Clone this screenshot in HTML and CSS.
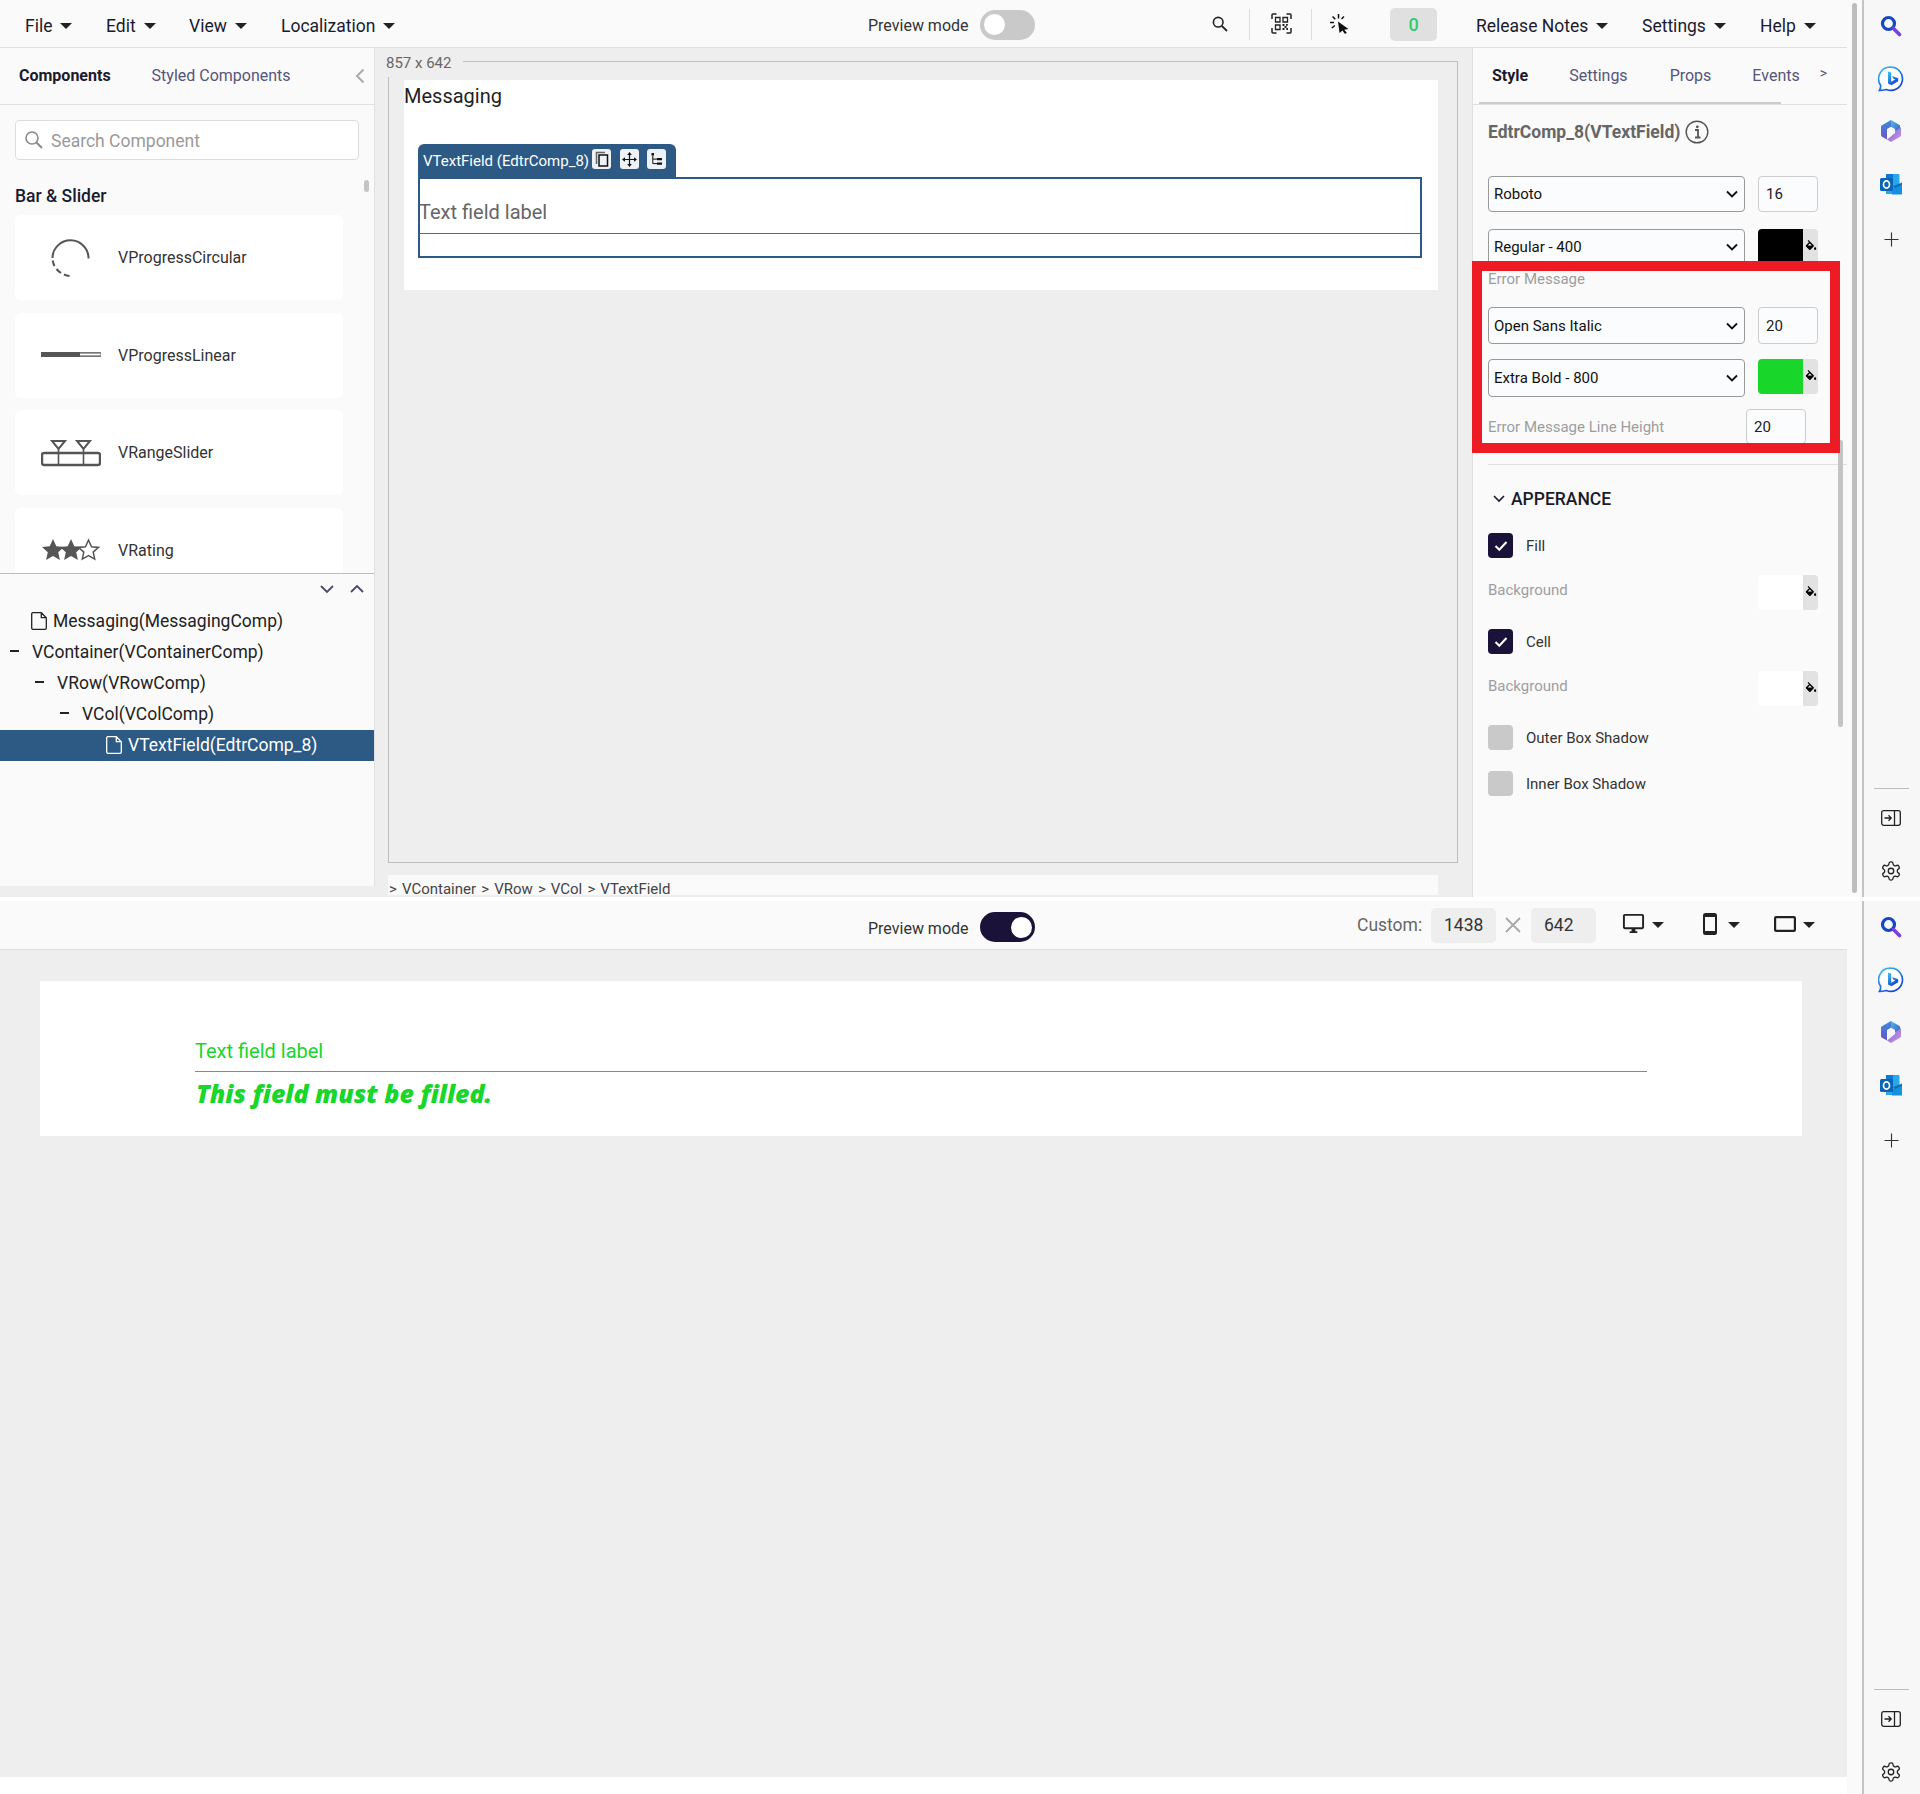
FILE: index.html
```html
<!DOCTYPE html>
<html lang="en">
<head>
<meta charset="utf-8">
<title>Messaging editor</title>
<link rel="stylesheet" href="styles.css">
</head>
<body>
<svg class="defs" width="0" height="0" aria-hidden="true">
  <defs>
    <linearGradient id="g-bing" x1="0" y1="0" x2="0.6" y2="1"><stop offset="0" stop-color="#3cc4f2"/><stop offset="1" stop-color="#1546d0"/></linearGradient>
    <linearGradient id="g-cop1" x1="0" y1="0" x2="0" y2="1"><stop offset="0" stop-color="#3a8bdc"/><stop offset="1" stop-color="#6a55c4"/></linearGradient>
    <linearGradient id="g-cop2" x1="0" y1="0" x2="1" y2="1"><stop offset="0" stop-color="#7f62d8"/><stop offset="1" stop-color="#c99ae6"/></linearGradient>
    <linearGradient id="g-cop3" x1="0" y1="0" x2="1" y2="1"><stop offset="0" stop-color="#56b8e6"/><stop offset="1" stop-color="#3a62c8"/></linearGradient>
    <symbol id="i-bucket" viewBox="0 0 24 24"><path d="M16.560 8.940L7.620 0 6.210 1.410l2.380 2.380-5.150 5.150c-.59.59-.59 1.540 0 2.120l5.500 5.500c.29.29.68.44 1.060.44s.77-.15 1.060-.44l5.500-5.500c.59-.58.59-1.530 0-2.120zM19 11.500s-2 2.170-2 3.500c0 1.100.9 2 2 2s2-.9 2-2c0-1.330-2-3.500-2-3.500z"/><path d="M5.500 10.500h9.500l-4.800 5z" fill="#fff" opacity="0"/><path d="M6.500 9.500 10 6l3.500 3.500z" fill="#fff"/></symbol>
    <symbol id="i-file" viewBox="0 0 16 18"><path d="M2 .7h8.300L15.300 5.700V16a1.300 1.300 0 0 1-1.300 1.300H2A1.300 1.300 0 0 1 .7 16V2A1.300 1.300 0 0 1 2 .7zM10.300.7v5h5" fill="none" stroke="currentColor" stroke-width="1.300"/></symbol>
    <symbol id="i-rsearch" viewBox="0 0 22 22"><circle cx="8.500" cy="8.500" r="6" fill="none" stroke="#1646c0" stroke-width="3.200"/><path d="M13.500 13.500 19.500 19.500" stroke="#7a3fe0" stroke-width="3.600" stroke-linecap="round"/></symbol>
    <symbol id="i-bing" viewBox="0 0 26 26"><path d="M13 1.200a11.600 11.600 0 1 1-4.600 22.300c-2.400.5-5 .9-7 .9.900-1.300 1.300-3 1.300-5A11.600 11.600 0 0 1 13 1.200z" fill="#fff" stroke="url(#g-bing)" stroke-width="1.700"/><path d="M10 5.500l3.200 1.100v9.200l4-2.300-2-1-1-2.400 6 2.100v3l-6.700 4L10 17.500z" fill="url(#g-bing)"/></symbol>
    <symbol id="i-copilot" viewBox="0 0 24 24"><path d="M12 1 21 6.200v3.600L15.500 13 12 8z" fill="url(#g-cop3)"/><path d="M12 1 3 6.200C2 6.800 2 7.500 2 8v8c0 .8.300 1.300 1 1.700L8 20.600V11.500l4-3.500z" fill="url(#g-cop1)"/><path d="M22 8v8c0 .8-.3 1.300-1 1.700L12 23 8 20.600 12.500 17 16 13z" fill="url(#g-cop2)"/><path d="M12 7.800 16 10v4.200l-4 2.200-4-2.200V10z" fill="#f7f7f7"/></symbol>
    <symbol id="i-outlook" viewBox="0 0 22 22"><path d="M6 1h12.500a1 1 0 0 1 1 1v19H6z" fill="#28a8ea"/><path d="M6 1h7v6H6z" fill="#0f78d4"/><path d="M22 9.500 12 16v5.500h10z" fill="#1490df"/><path d="M13 13 22 9.500v2L15 15z" fill="#0a3f78" opacity=".5"/><rect x="0" y="5" width="13" height="13" rx="1.500" fill="#0a64b8"/><ellipse cx="6.500" cy="11.500" rx="3" ry="3.600" fill="none" stroke="#fff" stroke-width="1.700"/></symbol>
    <symbol id="i-plus" viewBox="0 0 16 16"><path d="M8 .5v15M.5 8h15" stroke="#333" stroke-width="1.200" fill="none"/></symbol>
    <symbol id="i-panel" viewBox="0 0 20 16"><rect x=".7" y=".7" width="18.600" height="14.600" rx="2" fill="none" stroke="#222" stroke-width="1.300"/><path d="M13.500.7v14.600" stroke="#222" stroke-width="1.300"/><path d="M3.500 8h6.500M7.500 5.300 10.200 8 7.500 10.700" fill="none" stroke="#222" stroke-width="1.300"/></symbol>
    <symbol id="i-gear" viewBox="0 0 24 24"><path d="M12.220 2h-.44a2 2 0 0 0-2 2v.18a2 2 0 0 1-1 1.730l-.43.25a2 2 0 0 1-2 0l-.15-.08a2 2 0 0 0-2.730.73l-.22.38a2 2 0 0 0 .73 2.730l.15.1a2 2 0 0 1 1 1.720v.51a2 2 0 0 1-1 1.740l-.15.09a2 2 0 0 0-.73 2.730l.22.38a2 2 0 0 0 2.730.73l.15-.08a2 2 0 0 1 2 0l.43.25a2 2 0 0 1 1 1.730V20a2 2 0 0 0 2 2h.44a2 2 0 0 0 2-2v-.18a2 2 0 0 1 1-1.730l.43-.25a2 2 0 0 1 2 0l.15.08a2 2 0 0 0 2.730-.73l.22-.39a2 2 0 0 0-.73-2.730l-.15-.08a2 2 0 0 1-1-1.740v-.5a2 2 0 0 1 1-1.740l.15-.09a2 2 0 0 0 .73-2.730l-.22-.38a2 2 0 0 0-2.730-.73l-.15.08a2 2 0 0 1-2 0l-.43-.25a2 2 0 0 1-1-1.730V4a2 2 0 0 0-2-2z" fill="none" stroke="#222" stroke-width="1.400"/><circle cx="12" cy="12" r="3" fill="none" stroke="#222" stroke-width="1.400"/></symbol>
  </defs>
</svg>

<section class="frame frame-top">
  <div class="work">
    <header class="bar bar-top">
      <nav class="menu">
        <span class="menu-item menu-file">File <i class="caret"></i></span>
        <span class="menu-item menu-edit">Edit <i class="caret"></i></span>
        <span class="menu-item menu-view">View <i class="caret"></i></span>
        <span class="menu-item">Localization <i class="caret"></i></span>
      </nav>
      <div class="preview preview-top">
        <span class="preview-label">Preview mode</span>
        <span class="toggle"><i class="knob"></i></span>
      </div>
      <div class="tools">
        <svg class="tool-search" width="16" height="16" viewBox="0 0 16 16"><circle cx="6.200" cy="6.200" r="4.800" fill="none" stroke="#222" stroke-width="1.600"/><path d="M9.800 9.800 15 15" stroke="#222" stroke-width="1.800"/></svg>
        <i class="tool-sep tool-sep-a"></i>
        <svg class="tool-qr" width="21" height="21" viewBox="0 0 21 21"><path d="M1 6V2a1 1 0 0 1 1-1h3.500M15.500 1H19a1 1 0 0 1 1 1v4M20 15v4a1 1 0 0 1-1 1h-3.500M5.500 20H2a1 1 0 0 1-1-1v-4" fill="none" stroke="#222" stroke-width="1.500"/><path d="M4.500 4.500h4.500V9H4.500zM12 4.500h4.500V9H12zM4.500 12H9v4.500H4.500z" fill="none" stroke="#222" stroke-width="1.300"/><path d="M11.500 11h2v2h-2zM15 11h1.800v1.800H15zM13.500 13h2v2h-2zM11.500 15h2v2h-2zM15.300 15h1.700v2h-1.700z" fill="#222"/></svg>
        <i class="tool-sep tool-sep-b"></i>
        <svg class="tool-click" width="20" height="20" viewBox="0 0 20 20"><path d="M8 7.500 18.500 15l-4.200.8 2.500 3-1.800 1.200-2.500-3.500L9.500 19z" fill="#111"/><path d="M8.500 0v4.500M2.500 2.500l2.800 2.800M14 2.500l-2.500 2.500M0 8.500h4M1.800 14l3-2.500" stroke="#111" stroke-width="1.500" fill="none"/></svg>
        <span class="badge">0</span>
      </div>
      <nav class="menu menu-right">
        <span class="menu-item menu-notes">Release Notes <i class="caret"></i></span>
        <span class="menu-item menu-settings">Settings <i class="caret"></i></span>
        <span class="menu-item">Help <i class="caret"></i></span>
      </nav>
    </header>
    <div class="panes">
      <aside class="left">
        <div class="tabs-left">
          <span class="tab-strong">Components</span>
          <span class="tab-soft">Styled Components</span>
          <svg class="collapse" width="10" height="16" viewBox="0 0 10 16"><path d="M8.500 1.500 2 8l6.500 6.500" fill="none" stroke="#aaa" stroke-width="2"/></svg>
        </div>
        <div class="list-wrap">
          <div class="search">
            <svg width="20" height="20" viewBox="0 0 20 20"><circle cx="8" cy="8" r="6" fill="none" stroke="#8a8a8a" stroke-width="1.600"/><path d="M12.500 12.500 18 18" stroke="#8a8a8a" stroke-width="2"/></svg>
            <span class="search-text">Search Component</span>
          </div>
          <h2 class="group-title">Bar &amp; Slider</h2>
          <div class="cards">
            <div class="card">
              <svg class="card-icon" width="60" height="40" viewBox="0 0 60 40"><path d="M47.500 20.500A18 18 0 0 0 11.500 20" fill="none" stroke="#555" stroke-width="2"/><path d="M11.700 22.500A18 18 0 0 0 13.500 28M15.500 31A18 18 0 0 0 20 35M23 36.500A18 18 0 0 0 28.500 38" fill="none" stroke="#555" stroke-width="2"/></svg>
              <span>VProgressCircular</span>
            </div>
            <div class="card">
              <svg class="card-icon" width="60" height="8" viewBox="0 0 60 8"><rect x="0" y="1" width="60" height="5" fill="#777"/><rect x="0" y="1" width="39" height="5" fill="#555"/><rect x="39" y="2.700" width="20.500" height="1.600" fill="#fff"/></svg>
              <span>VProgressLinear</span>
            </div>
            <div class="card">
              <svg class="card-icon" width="60" height="28" viewBox="0 0 60 28"><path d="M11 2h13l-6.500 8zM36 2h13l-6.500 8z" fill="none" stroke="#555" stroke-width="2"/><rect x="1" y="14" width="58" height="12" rx="2" fill="none" stroke="#555" stroke-width="2.400"/><path d="M17.500 10v16M42.500 10v16" stroke="#555" stroke-width="1.600"/></svg>
              <span>VRangeSlider</span>
            </div>
            <div class="card">
              <svg class="card-icon" width="60" height="24" viewBox="1 0 58 24"><path d="M12 1l3.300 7.300 7.700.8-5.800 5.200 1.700 7.700L12 18l-6.900 4 1.700-7.700L1 9.100l7.700-.8zM30 1l3.300 7.300 7.700.8-5.800 5.200 1.700 7.700L30 18l-6.900 4 1.700-7.700L19 9.100l7.700-.8z" fill="#555"/><path d="M47.500 2l3 6.700 7 .7-5.300 4.700 1.500 7-6.200-3.600-6.200 3.600 1.500-7-5.300-4.700 7-.7z" fill="#fff" stroke="#555" stroke-width="1.500"/></svg>
              <span>VRating</span>
            </div>
          </div>
          <i class="thumb-left"></i>
        </div>
        <div class="tree">
          <div class="tree-tools">
            <svg width="14" height="8" viewBox="0 0 14 8"><path d="M1 1l6 6 6-6" fill="none" stroke="#4a4a6a" stroke-width="1.800"/></svg>
            <svg width="14" height="8" viewBox="0 0 14 8"><path d="M1 7l6-6 6 6" fill="none" stroke="#4a4a6a" stroke-width="1.800"/></svg>
          </div>
          <div class="tree-row lvl-doc"><svg width="16" height="18"><use href="#i-file"/></svg><span>Messaging(MessagingComp)</span></div>
          <div class="tree-row lvl-0"><i class="dash"></i><span>VContainer(VContainerComp)</span></div>
          <div class="tree-row lvl-1"><i class="dash"></i><span>VRow(VRowComp)</span></div>
          <div class="tree-row lvl-2"><i class="dash"></i><span>VCol(VColComp)</span></div>
          <div class="tree-row lvl-sel"><svg width="16" height="18"><use href="#i-file"/></svg><span>VTextField(EdtrComp_8)</span></div>
        </div>
      </aside>
      <main class="center">
        <div class="stage">
          <span class="stage-size">857 x 642</span>
          <div class="canvas">
            <div class="canvas-title">Messaging</div>
            <div class="sel-tab">
              <span>VTextField (EdtrComp_8)</span>
              <b class="sel-btn sel-btn-a"><svg width="14" height="16" viewBox="0 0 14 16"><path d="M1.500 13V1.500h8.500" fill="none" stroke="#666" stroke-width="1.500"/><rect x="4" y="4" width="8.500" height="11" fill="none" stroke="#111" stroke-width="1.500"/></svg></b>
              <b class="sel-btn sel-btn-b"><svg width="15" height="15" viewBox="0 0 15 15"><path d="M7.500 2v11M2 7.500h11" stroke="#111" stroke-width="1.200"/><path d="M7.500 0 9.800 3H5.200zM7.500 15 5.200 12h4.600zM0 7.500 3 5.200v4.600zM15 7.500 12 9.800V5.200z" fill="#111"/></svg></b>
              <b class="sel-btn sel-btn-c"><svg width="14" height="14" viewBox="0 0 14 14"><path d="M1.500 1h2.500v2.500H1.500zM7 6h5v2.200H7zM7 10.500h5v2.200H7z" fill="#111"/><path d="M2.800 3.500V11.600H7M2.800 7.100H7" fill="none" stroke="#111"/></svg></b>
            </div>
            <div class="sel-box">
              <div class="sel-field"><span>Text field label</span></div>
            </div>
          </div>
        </div>
        <div class="crumbs">&gt; VContainer &gt; VRow &gt; VCol &gt; VTextField</div>
      </main>
      <aside class="right">
        <div class="tabs-right">
          <div class="tabs-right-inner">
            <span class="tab-strong tr-style">Style</span>
            <span class="tab-soft tr-settings">Settings</span>
            <span class="tab-soft tr-props">Props</span>
            <span class="tab-soft tr-events">Events</span>
            <span class="tr-more">&gt;</span>
          </div>
        </div>
        <div class="props">
          <div class="prop-title">
            <span>EdtrComp_8(VTextField)</span>
            <svg width="24" height="24" viewBox="0 0 24 24"><circle cx="12" cy="12" r="10.800" fill="none" stroke="#555" stroke-width="1.400"/><path d="M10 10h3v7.500M10 17.500h5.500" fill="none" stroke="#555" stroke-width="1.800"/><circle cx="12.300" cy="6.800" r="1.400" fill="#555"/></svg>
          </div>
          <div class="row row-first">
            <select class="sel"><option>Roboto</option></select>
            <span class="num">16</span>
          </div>
          <div class="row row-second">
            <select class="sel"><option>Regular - 400</option></select>
            <span class="color"><i class="swatch swatch-black"></i><i class="fill"><svg width="14" height="14"><use href="#i-bucket"/></svg></i></span>
          </div>
          <div class="muted err-label">Error Message</div>
          <div class="row row-third">
            <select class="sel"><option>Open Sans Italic</option></select>
            <span class="num">20</span>
          </div>
          <div class="row row-fourth">
            <select class="sel"><option>Extra Bold - 800</option></select>
            <span class="color"><i class="swatch swatch-green"></i><i class="fill"><svg width="14" height="14"><use href="#i-bucket"/></svg></i></span>
          </div>
          <div class="row row-lh">
            <span class="muted lh-label">Error Message Line Height</span>
            <span class="num num-lh">20</span>
          </div>
          <hr class="sep">
          <div class="section-title">
            <svg width="12" height="8" viewBox="0 0 12 8"><path d="M1 1l5 5 5-5" fill="none" stroke="#1a1a2e" stroke-width="1.600"/></svg>
            <span>APPERANCE</span>
          </div>
          <label class="check check-fill"><i class="box on"><svg width="14" height="12" viewBox="0 0 14 12"><path d="M1.500 6l3.800 3.800L12.500 2" fill="none" stroke="#fff" stroke-width="2"/></svg></i><span>Fill</span></label>
          <div class="bg-row bg-a"><span class="muted bg-text">Background</span><span class="color"><i class="swatch swatch-white"></i><i class="fill"><svg width="14" height="14"><use href="#i-bucket"/></svg></i></span></div>
          <label class="check check-cell"><i class="box on"><svg width="14" height="12" viewBox="0 0 14 12"><path d="M1.500 6l3.800 3.800L12.500 2" fill="none" stroke="#fff" stroke-width="2"/></svg></i><span>Cell</span></label>
          <div class="bg-row bg-b"><span class="muted bg-text">Background</span><span class="color"><i class="swatch swatch-white"></i><i class="fill"><svg width="14" height="14"><use href="#i-bucket"/></svg></i></span></div>
          <label class="check check-outer"><i class="box"></i><span>Outer Box Shadow</span></label>
          <label class="check check-inner"><i class="box"></i><span>Inner Box Shadow</span></label>
        </div>
        <i class="thumb-right"></i>
        <div class="highlight"></div>
      </aside>
    </div>
  </div>
  <div class="strip"><i class="thumb-main"></i></div>
  <div class="rail">
    <svg class="r-icon" width="22" height="22"><use href="#i-rsearch"/></svg>
    <svg class="r-icon r-bing" width="26" height="26"><use href="#i-bing"/></svg>
    <svg class="r-icon r-copilot" width="24" height="24"><use href="#i-copilot"/></svg>
    <svg class="r-icon" width="22" height="22"><use href="#i-outlook"/></svg>
    <svg class="r-plus" width="15" height="15"><use href="#i-plus"/></svg>
    <div class="rail-foot">
      <i class="rail-div"></i>
      <svg class="r-panel" width="20" height="16"><use href="#i-panel"/></svg>
      <svg class="r-gear" width="22" height="22"><use href="#i-gear"/></svg>
    </div>
  </div>
</section>

<section class="frame frame-bottom">
  <div class="work">
    <header class="bar bar-bottom">
      <div class="preview preview-bottom">
        <span class="preview-label">Preview mode</span>
        <span class="toggle toggle-on"><i class="knob"></i></span>
      </div>
      <div class="viewport">
        <span class="custom">Custom:</span>
        <span class="dim">1438</span>
        <svg class="times" width="16" height="16" viewBox="0 0 16 16"><path d="M1 1l14 14M15 1 1 15" stroke="#a8a8a8" stroke-width="1.800"/></svg>
        <span class="dim">642</span>
        <span class="device device-a"><svg width="23" height="23" viewBox="0 0 24 24"><path d="M21 2H3c-1.100 0-2 .9-2 2v12c0 1.100.9 2 2 2h7v2H8v2h8v-2h-2v-2h7c1.100 0 2-.9 2-2V4c0-1.100-.9-2-2-2zm0 14H3V4h18v12z" fill="#222"/></svg><i class="caret"></i></span>
        <span class="device device-b"><svg width="14" height="22" viewBox="0 0 14 22"><rect x="1" y="1" width="12" height="20" rx="1.500" fill="none" stroke="#222" stroke-width="2"/><path d="M1 3h12M1 19h12" stroke="#222" stroke-width="1.800"/></svg><i class="caret"></i></span>
        <span class="device device-c"><svg width="22" height="16" viewBox="0 0 22 16"><rect x="1.100" y="1.100" width="19.800" height="13.800" rx="1" fill="none" stroke="#222" stroke-width="2.200"/></svg><i class="caret"></i></span>
      </div>
    </header>
    <div class="preview-area">
      <div class="preview-card">
        <div class="pv-field">
          <div class="pv-label">Text field label</div>
          <div class="pv-error">This field must be filled.</div>
        </div>
      </div>
    </div>
  </div>
  <div class="strip"></div>
  <div class="rail">
    <svg class="r-icon" width="22" height="22"><use href="#i-rsearch"/></svg>
    <svg class="r-icon r-bing" width="26" height="26"><use href="#i-bing"/></svg>
    <svg class="r-icon r-copilot" width="24" height="24"><use href="#i-copilot"/></svg>
    <svg class="r-icon" width="22" height="22"><use href="#i-outlook"/></svg>
    <svg class="r-plus" width="15" height="15"><use href="#i-plus"/></svg>
    <div class="rail-foot">
      <i class="rail-div"></i>
      <svg class="r-panel" width="20" height="16"><use href="#i-panel"/></svg>
      <svg class="r-gear" width="22" height="22"><use href="#i-gear"/></svg>
    </div>
  </div>
</section>
</body>
</html>
```
FILE: styles.css
```css
* { box-sizing: border-box; }
html, body { margin: 0; padding: 0; background: #fff; }
body { width: 1920px; height: 1794px; overflow: hidden; font-family: Roboto, "Liberation Sans", sans-serif; color: #1a1a2e; }
i, b { display: block; font-style: normal; font-weight: normal; }
svg { display: block; flex: none; }
.defs { position: absolute; }

.frame { display: flex; width: 1920px; }
.frame-top { height: 897px; margin-bottom: 4px; background: #eee; }
.frame-bottom { height: 893px; background: #fff; }
.work { width: 1847px; display: flex; flex-direction: column; }
.strip { width: 15px; background: #fafafa; position: relative; }
.thumb-main { position: absolute; left: 5px; top: 3px; width: 5px; height: 890px; border-radius: 3px; background: #bdbdbd; }

.rail { width: 58px; background: #f7f7f7; border-left: 2px solid #c4c4c4; display: flex; flex-direction: column; align-items: center; padding-right: 2px; }
.r-icon { height: 22px; margin: 15px 0 15.500px; }
.r-bing { height: 26px; margin: 13px 0 13.500px; }
.r-copilot { height: 24px; margin: 14px 0 14.500px; }
.r-plus { margin: 22px 0 0; }
.rail-foot { margin-top: 541px; display: flex; flex-direction: column; align-items: center; }
.rail-div { width: 35px; height: 1px; background: #bdbdbd; }
.r-panel { margin-top: 21px; }
.r-gear { margin-top: 34px; }

.bar { flex: none; background: #fafafa; border-bottom: 1px solid #e0e0e0; display: flex; align-items: center; }
.bar-top { height: 48px; padding-top: 2px; }
.bar-bottom { height: 49px; }
.menu { display: flex; font-size: 17.500px; white-space: nowrap; margin-top: 2px; }
.bar > .menu:first-child { width: 868px; padding-left: 25px; }
.menu-item { display: flex; align-items: center; gap: 8px; }
.menu-file { width: 81px; }
.menu-edit { width: 83px; }
.menu-view { width: 92px; }
.menu-notes { width: 166px; }
.menu-settings { width: 118px; }
.caret { width: 0; height: 0; border-left: 6px solid transparent; border-right: 6px solid transparent; border-top: 6px solid #222; }

.preview { display: flex; align-items: center; gap: 11px; }
.preview-top { width: 340px; }
.preview-bottom { margin-left: 868px; margin-top: 4px; width: 489px; }
.preview-label { font-size: 16px; color: #333; width: 101px; white-space: nowrap; margin-top: 2px; }
.toggle { display: block; width: 55px; height: 30px; border-radius: 15px; background: #c9c9c9; padding: 4px; }
.knob { width: 21px; height: 21px; border-radius: 50%; background: #fff; margin-top: .500px; }
.toggle-on { background: #1a1238; }
.toggle-on .knob { margin-left: 27px; }

.tools { display: flex; align-items: center; width: 268px; }
.tool-search { margin-left: 4px; margin-top: -2px; }
.tool-sep { width: 1px; height: 31px; background: #ddd; margin-top: -1px; }
.tool-sep-a { margin-left: 21px; }
.tool-qr { margin-left: 21px; margin-top: -2px; }
.tool-sep-b { margin-left: 19px; }
.tool-click { margin-left: 18px; margin-top: -1px; }
.badge { margin-left: 40px; width: 47px; height: 33px; border-radius: 5px; background: #e0e0e0; color: #2ecc71; font-size: 18px; font-weight: 500; display: flex; align-items: center; justify-content: center; }

.panes { display: flex; height: 849px; flex: none; }
.left { width: 375px; height: 838px; background: #fafafa; border-right: 1px solid #e0e0e0; display: flex; flex-direction: column; }
.tabs-left { height: 57px; flex: none; border-bottom: 1px solid #e0e0e0; display: flex; align-items: center; padding: 0 0 2px 19px; }
.tab-strong { font-size: 16px; font-weight: 700; color: #1a1a2e; }
.tab-soft { font-size: 16px; color: #55557a; }
.tabs-left .tab-soft { margin-left: 41px; }
.collapse { margin-left: 64px; margin-top: 2px; }
.list-wrap { height: 468px; flex: none; overflow: hidden; position: relative; padding: 15px 0 0 15px; }
.search { width: 344px; height: 40px; background: #fff; border: 1px solid #ddd; border-radius: 4px; display: flex; align-items: center; gap: 8px; padding-left: 8px; font-size: 17.500px; color: #9a9a9a; }
.search-text { margin-top: 2px; margin-left: -1px; }
.group-title { font-size: 17.500px; font-weight: 500; margin: 24px 0 7px; line-height: 24px; color: #1a1a2e; }
.cards { display: flex; flex-direction: column; gap: 12.500px; width: 328px; }
.card { height: 85px; flex: none; background: #fff; border-radius: 6px; display: flex; align-items: center; font-size: 16px; color: #333; padding-left: 26px; }
.card-icon { width: 60px; margin-right: 17px; }
.thumb-left { position: absolute; left: 364px; top: 75px; width: 5px; height: 12px; border-radius: 3px; background: #c4c4c4; }

.tree { border-top: 1px solid #bdbdbd; flex: 1; font-size: 17.500px; color: #222; }
.tree-tools { height: 31.500px; display: flex; justify-content: flex-end; gap: 16px; padding: 11px 10px 0 0; }
.tree-row { height: 31px; display: flex; align-items: center; white-space: nowrap; }
.lvl-doc { padding-left: 31px; gap: 6px; }
.lvl-0, .lvl-1, .lvl-2 { gap: 13px; }
.lvl-0 { padding-left: 10px; }
.lvl-1 { padding-left: 35px; }
.lvl-2 { padding-left: 60px; }
.dash { width: 9px; height: 2px; background: #222; margin-top: -3px; }
.lvl-sel { padding-left: 106px; gap: 6px; background: #2c5a85; color: #fff; }

.center { width: 1097px; padding: 13px 0 0 13px; }
.stage { width: 1070px; height: 802px; border: 1px solid #bdbdbd; padding: 18px 0 0 15px; position: relative; }
.stage-size { position: absolute; left: -3px; top: -14px; height: 29px; width: 77px; padding-top: 6px; background: #eee; font-size: 15px; color: #666; white-space: nowrap; }
.canvas { width: 1034px; height: 210px; background: #fff; padding: 0 0 0 14px; }
.canvas-title { font-size: 20px; line-height: 30px; margin-left: -14px; padding-top: 1px; height: 30px; color: #222; }
.sel-tab { margin-top: 34px; width: 258px; height: 34px; background: #2c5a85; border-radius: 6px 6px 0 0; color: #fff; font-size: 15px; display: flex; align-items: center; padding: 0 0 0 5px; white-space: nowrap; }
.sel-btn { width: 19px; height: 20px; margin-top: -4px; border-radius: 3px; background: #eef1f5; display: flex; align-items: center; justify-content: center; }
.sel-btn-a { margin-left: 3px; }
.sel-btn-b { margin-left: 9px; }
.sel-btn-c { margin-left: 8px; }
.sel-box { width: 1004px; height: 81px; margin-top: -1px; border: 2px solid #2c5a85; }
.sel-field { height: 55px; border-bottom: 1px solid #666; font-size: 20px; color: #666; display: flex; align-items: flex-end; padding-bottom: 9px; line-height: 24px; margin-left: -1px; }
.crumbs { width: 1050px; height: 20px; margin-top: 12px; background: #fafafa; font-size: 15px; word-spacing: 1.400px; color: #444; line-height: 29px; white-space: nowrap; padding-left: 1px; }

.right { width: 375px; height: 849px; background: #fafafa; border-left: 1px solid #e0e0e0; position: relative; }
.tabs-right { height: 57px; border-bottom: 1px solid #e0e0e0; }
.tabs-right-inner { width: 302px; height: 56px; margin-left: 6px; border-bottom: 2px solid #ccc; display: flex; align-items: center; white-space: nowrap; }
.tr-style { margin-left: 13px; }
.tr-settings { margin-left: 41px; }
.tr-props { margin-left: 42px; }
.tr-events { margin-left: 41px; }
.tr-more { margin-left: 20px; font-size: 14px; color: #55557a; margin-top: -4px; }
.props { padding: 0 0 0 15px; }
.prop-title { display: flex; align-items: center; gap: 5px; height: 28px; margin-top: 13px; font-size: 17.500px; font-weight: 700; color: #666; }
.row { display: flex; gap: 13px; height: 36px; }
.row-first { margin-top: 30px; }
.row-second { margin-top: 17px; }
.row-third { margin-top: 16px; height: 37px; }
.row-fourth { margin-top: 15px; height: 38px; }
.sel { appearance: none; width: 257px; height: 100%; border: 1px solid #999; border-radius: 4px; background: #fbfcfe url("data:image/svg+xml,%3Csvg xmlns='http://www.w3.org/2000/svg' width='12' height='8' viewBox='0 0 12 8'%3E%3Cpath d='M1 1.500l5 5 5-5' fill='none' stroke='%23111' stroke-width='1.800'/%3E%3C/svg%3E") no-repeat right 6px center; font-family: Roboto, sans-serif; font-size: 15px; color: #111; padding: 0 0 0 5px; }
.num { width: 60px; height: 100%; border: 1px solid #ccc; border-radius: 4px; font-size: 15px; color: #222; padding: 0 0 0 7px; display: flex; align-items: center; background: #fbfcfe; }
.color { display: flex; width: 60px; height: 35px; border-radius: 4px; overflow: hidden; }
.swatch { width: 45px; height: 100%; }
.swatch-black { background: #000; }
.swatch-green { background: #19d62a; }
.swatch-white { background: #fff; }
.fill { width: 15px; height: 100%; background: #e2e2e2; display: flex; align-items: center; justify-content: center; }
.muted { font-size: 15px; color: #9e9e9e; }
.err-label { height: 24px; line-height: 24px; margin-top: 2px; }
.row-lh { margin-top: 12px; height: 35px; align-items: center; justify-content: space-between; width: 318px; }
.sep { width: 360px; border: 0; border-top: 1px solid #e0e0e0; margin: 20px 0 0 0; height: 0; }
.section-title { display: flex; align-items: center; gap: 6px; height: 24px; margin-top: 22px; padding-left: 5px; font-size: 17.500px; font-weight: 500; color: #1a1a2e; }
.check { display: flex; align-items: center; gap: 13px; font-size: 15px; color: #333; height: 25px; }
.box { width: 25px; height: 25px; border-radius: 4px; background: #c9c9c9; display: flex; align-items: center; justify-content: center; }
.box.on { background: #1a1238; }
.check-fill { margin-top: 22px; }
.bg-row { display: flex; justify-content: space-between; align-items: center; width: 330px; height: 35px; }
.bg-text { margin-bottom: 5px; }
.bg-a { margin-top: 17px; }
.check-cell { margin-top: 19px; }
.bg-b { margin-top: 17px; }
.check-outer { margin-top: 19px; }
.check-inner { margin-top: 21px; }
.thumb-right { position: absolute; left: 365px; top: 392px; width: 5px; height: 287px; border-radius: 3px; background: #c4c4c4; }
.highlight { position: absolute; left: -1px; top: 213px; width: 368px; height: 192px; border: 10px solid #ed1c24; }

.viewport { display: flex; align-items: center; }
.custom { font-size: 17.500px; color: #666; width: 74px; }
.dim { width: 65px; height: 35px; border-radius: 5px; background: #eee; font-size: 17.500px; color: #333; display: flex; align-items: center; padding-left: 13px; }
.times { margin: 0 10px 0 9px; }
.device { display: flex; align-items: center; gap: 7px; }
.device .caret { margin-top: -1px; }
.device svg { margin-top: -3px; }
.device-a { margin-left: 26px; }
.device-b { margin-left: 39px; gap: 11px; }
.device-c { margin-left: 34px; gap: 7px; }
.preview-area { height: 827px; background: #eee; padding: 31px 0 0 40px; }
.preview-card { width: 1762px; height: 155px; background: #fff; padding: 0 0 0 155px; }
.pv-field { width: 1452px; padding-top: 58px; }
.pv-label { height: 33px; line-height: 24px; font-size: 20px; color: #19d62a; border-bottom: 1px solid #2fc53d; }
.pv-error { font-family: "Open Sans", sans-serif; font-style: italic; font-weight: 800; font-size: 25px; line-height: 32px; margin-top: 5px; color: #19d62a; padding-left: 1px; }
```
